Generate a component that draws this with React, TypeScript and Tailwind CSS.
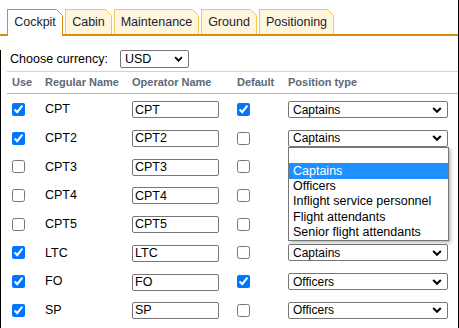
import React from "react";

const ORANGE = "#dc8a0e";

function Chevron({ w = 10 }: { w?: number }) {
  return (
    <svg width={w} height="6" viewBox="0 0 10 6" className="shrink-0">
      <polyline points="1.2,1 5,4.8 8.8,1" fill="none" stroke="#000" strokeWidth="2" />
    </svg>
  );
}

function Tab({ label, active, w }: { label: string; active?: boolean; w: string }) {
  const cls = active
    ? "relative bg-white border border-b-0 border-[#dc8a0e] h-[27px] -mb-[2px] pb-[2px]"
    : "relative bg-[#fff6dd] border border-b-0 border-[#f4c84a] h-[25px]";
  const stroke = active ? ORANGE : "#f4c84a";
  return (
    <div className={`${cls} ${w} flex items-center justify-center text-[12.5px] text-[#1b2233]`}>
      {label}
      <svg width="7" height="7" viewBox="0 0 7 7" className="absolute -top-px -right-px">
        <polygon points="0,0 7,0 7,7" fill="#fff" />
        <line x1="0.5" y1="0.5" x2="6.5" y2="6.5" stroke={stroke} strokeWidth="1" />
      </svg>
    </div>
  );
}

function Select({ value, hidden }: { value: string; hidden?: boolean }) {
  return (
    <div className="w-[160px] h-[17px] border border-[#767676] rounded-[2px] pl-[4px] pr-[5px] flex items-center justify-between bg-white">
      {hidden ? <span /> : <span className="leading-none">{value}</span>}
      <Chevron />
    </div>
  );
}

const rows = [
  { use: true, reg: "CPT", op: "CPT", def: true, pos: "Captains" },
  { use: true, reg: "CPT2", op: "CPT2", def: false, pos: "Captains" },
  { use: false, reg: "CPT3", op: "CPT3", def: false, pos: "Captains", hid: true },
  { use: false, reg: "CPT4", op: "CPT4", def: false, pos: "Captains", hid: true },
  { use: false, reg: "CPT5", op: "CPT5", def: false, pos: "Captains", hid: true },
  { use: true, reg: "LTC", op: "LTC", def: false, pos: "Captains" },
  { use: true, reg: "FO", op: "FO", def: true, pos: "Officers" },
  { use: true, reg: "SP", op: "SP", def: false, pos: "Officers" },
];

const options = ["", "Captains", "Officers", "Inflight service personnel", "Flight attendants", "Senior flight attendants"];

export default function App() {
  return (
    <div className="relative w-[459px] h-[328px] bg-white border-r border-black font-['Liberation_Sans',Arial,sans-serif] text-[12px] text-black overflow-hidden">
      <div className="h-[36px] flex items-end gap-[2px] pl-[7px] border-b-2 border-[#dc8a0e]">
        <Tab label="Cockpit" active w="w-[56px]" />
        <Tab label="Cabin" w="w-[47px]" />
        <Tab label="Maintenance" w="w-[85px]" />
        <Tab label="Ground" w="w-[56px]" />
        <Tab label="Positioning" w="w-[75px]" />
      </div>
      <div className="h-[292px] border-l border-b border-black">
        <div className="mt-[14px] h-[18px] flex items-center pl-[9px]">
          <span className="w-[110px] text-[12.5px]">Choose currency:</span>
          <div className="w-[69px] h-[18px] border border-[#767676] rounded-[2px] pl-[4px] pr-[5px] flex items-center justify-between">
            <span className="text-[12.5px] leading-none">USD</span>
            <Chevron w={9} />
          </div>
        </div>
        <div className="mt-[3px] ml-[6px]">
          <div className="h-[23px] border-t border-b border-t-[#d3d3d3] border-b-[#a9bacb] flex items-center pl-[5px] text-[11px] font-bold text-[#5b6978]">
            <span className="w-[33px]">Use</span>
            <span className="w-[87px]">Regular Name</span>
            <span className="w-[105px]">Operator Name</span>
            <span className="w-[51px]">Default</span>
            <span>Position type</span>
          </div>
          <div className="pt-[1.2px]">
            {rows.map((r) => (
              <div key={r.reg} className="h-[28.7px] flex items-center pl-[5px]">
                <div className="w-[33px] flex items-center">
                  <input type="checkbox" defaultChecked={r.use} className="m-0 w-[13px] h-[13px]" />
                </div>
                <span className="w-[87px] text-[12.5px]">{r.reg}</span>
                <div className="w-[105px]">
                  <input
                    type="text"
                    defaultValue={r.op}
                    className="w-[87px] h-[17px] border border-[#767676] rounded-[2px] px-[2px] text-[12.5px] outline-none"
                  />
                </div>
                <div className="w-[51px] flex items-center">
                  <input type="checkbox" defaultChecked={r.def} className="m-0 w-[13px] h-[13px]" />
                </div>
                <Select value={r.pos} hidden={r.hid} />
              </div>
            ))}
          </div>
        </div>
      </div>
      <div className="absolute left-[288px] top-[147px] w-[161px] border border-[#767676] bg-white shadow-[2px_2px_3px_rgba(0,0,0,0.25)] py-0 text-[12.5px]">
        {options.map((o, i) => (
          <div
            key={i}
            className={`h-[15.3px] pl-[4px] flex items-center leading-none ${i === 1 ? "bg-[#1e90ff] text-white" : "text-black"}`}
          >
            {o}
          </div>
        ))}
      </div>
    </div>
  );
}
